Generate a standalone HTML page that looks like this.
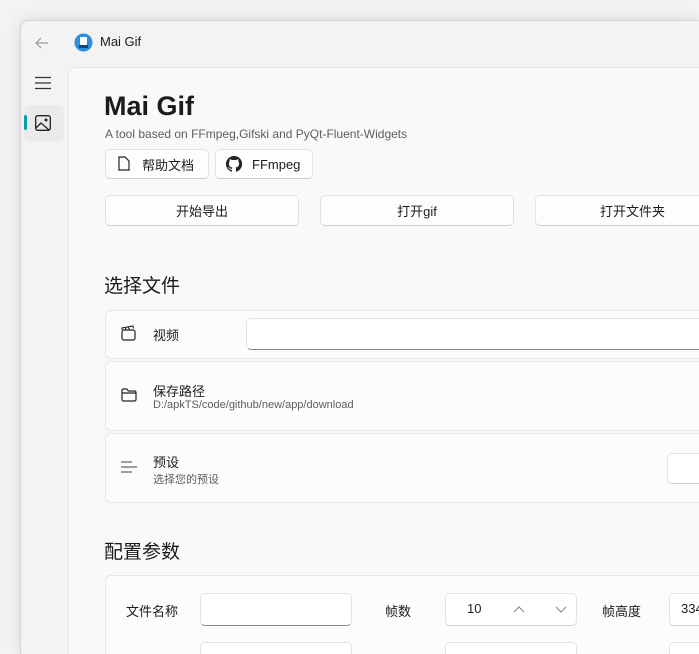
<!DOCTYPE html>
<html><head><meta charset="utf-8"><style>
*{box-sizing:border-box;margin:0;padding:0}
html,body{width:699px;height:654px;overflow:hidden}
body{background:#f3f3f3;font-family:"Segoe UI","Liberation Sans","Noto Sans CJK SC",sans-serif;color:#1b1b1b;position:relative}
.win{position:absolute;left:20px;top:20px;width:679px;height:634px;background:#f3f3f3;border:1px solid #d6d6d6;border-right:none;border-bottom:none;border-top-left-radius:8px;box-shadow:0 0 14px rgba(0,0,0,.12)}
.a{position:absolute}
.content{position:absolute;left:68px;top:67px;width:631px;height:587px;background:#f9f9f9;border-top:1px solid #e8e8e8;border-left:1px solid #e8e8e8;border-top-left-radius:8px}
.btn{position:absolute;background:#fdfdfd;border:1px solid #e3e3e3;border-bottom-color:#d0d0d0;border-radius:5px;font-size:13px;display:flex;align-items:center;justify-content:center}
.card{position:absolute;left:105px;width:594px;background:#fcfcfc;border:1px solid #e6e6e6;border-right:none;border-radius:6px 0 0 6px}
.inp{position:absolute;background:#fff;border:1px solid #e3e3e3;border-bottom:1px solid #8a8a8a;border-radius:5px}
.t13{font-size:13px}
.sub{font-size:11px;color:#5d5d5d}
</style></head><body>
<div class="win"></div>
<svg class="a" style="left:34px;top:35px" width="16" height="16" viewBox="0 0 16 16"><path d="M14 8H2M7 3L2 8l5 5" fill="none" stroke="#9a9a9a" stroke-width="1.2"/></svg>
<svg class="a" style="left:74px;top:33px" width="19" height="19" viewBox="0 0 19 19"><circle cx="9.5" cy="9.5" r="9" fill="#2b8fe0"/><rect x="6" y="4" width="7" height="8" rx="1" fill="#fff"/><rect x="5" y="12" width="9" height="3" fill="#14457a"/></svg>
<div class="a" style="left:100px;top:34px;font-size:13px">Mai Gif</div>
<svg class="a" style="left:35px;top:76px" width="17" height="14"><path d="M0 1.5h16M0 7h16M0 12.5h16" stroke="#333" stroke-width="1.3"/></svg>
<div class="a" style="left:24px;top:105px;width:40px;height:36px;background:#eaeaea;border-radius:5px"></div>
<div class="a" style="left:24px;top:115px;width:3px;height:15px;background:#0a9ea8;border-radius:2px"></div>
<svg class="a" style="left:35px;top:115px" width="16" height="16" viewBox="0 0 16 16"><rect x="0.7" y="0.7" width="14.6" height="14.6" rx="2" fill="none" stroke="#222" stroke-width="1.3"/><path d="M1 13l5-5 8 7" fill="none" stroke="#222" stroke-width="1.3"/><circle cx="11" cy="5" r="1.5" fill="#222"/></svg>
<div class="content"></div>
<div class="a" style="left:104px;top:91px;font-size:27px;font-weight:600">Mai Gif</div>
<div class="a sub" style="left:105px;top:127px;font-size:12px">A tool based on FFmpeg,Gifski and PyQt-Fluent-Widgets</div>
<div class="btn" style="left:105px;top:149px;width:104px;height:30px;justify-content:flex-start;padding-left:36px">帮助文档</div>
<svg class="a" style="left:118px;top:156px" width="12" height="15" viewBox="0 0 12 15"><path d="M1 1h6l4 4v9H1z" fill="none" stroke="#222" stroke-width="1.2"/></svg>
<div class="btn" style="left:215px;top:149px;width:98px;height:30px;justify-content:flex-start;padding-left:36px">FFmpeg</div>
<svg class="a" style="left:226px;top:156px" width="16" height="16" viewBox="0 0 16 16"><path fill="#222" d="M8 0a8 8 0 0 0-2.5 15.6c.4.1.5-.2.5-.4v-1.4c-2.2.5-2.7-1-2.7-1-.4-.9-.9-1.2-.9-1.2-.7-.5.1-.5.1-.5.8.1 1.2.8 1.2.8.7 1.3 1.9.9 2.3.7.1-.5.3-.9.5-1.1-1.8-.2-3.6-.9-3.6-4 0-.9.3-1.6.8-2.1-.1-.2-.4-1 .1-2.1 0 0 .7-.2 2.2.8a7.600 7.600 0 0 1 4 0c1.5-1 2.200-.8 2.200-.8.400 1.100.200 1.900.100 2.100.500.600.800 1.300.800 2.100 0 3.100-1.900 3.800-3.600 4 .300.300.500.800.500 1.500v2.200c0 .200.100.500.600.400A8 8 0 0 0 8 0z"/></svg>
<div class="btn" style="left:105px;top:195px;width:194px;height:31px">开始导出</div>
<div class="btn" style="left:320px;top:195px;width:194px;height:31px">打开gif</div>
<div class="btn" style="left:535px;top:195px;width:164px;height:31px;border-right:none;border-radius:5px 0 0 5px;padding-left:30px">打开文件夹</div>
<div class="a" style="left:104px;top:271px;font-size:19px">选择文件</div>
<div class="card" style="top:310px;height:49px"></div>
<svg class="a" style="left:121px;top:325px" width="15" height="16" viewBox="0 0 15 16"><rect x="1" y="5" width="13" height="10" rx="2" fill="none" stroke="#222" stroke-width="1.2"/><path d="M1 5V3l11-2 .5 2.5M4 2.5l1.5 2.5M7 2l1.5 2.5" fill="none" stroke="#222" stroke-width="1.1"/></svg>
<div class="a t13" style="left:153px;top:325px">视频</div>
<div class="inp" style="left:246px;top:318px;width:453px;height:32px;border-right:none;border-radius:5px 0 0 5px"></div>
<div class="card" style="top:361px;height:70px"></div>
<svg class="a" style="left:121px;top:388px" width="16" height="14" viewBox="0 0 16 14"><path d="M1 2.5a1.5 1.5 0 011.5-1.5h3l2 2h6a1.5 1.5 0 011.5 1.5v7a1.5 1.5 0 01-1.5 1.5h-11A1.5 1.5 0 011 11.5zM1 5h14" fill="none" stroke="#222" stroke-width="1.2"/></svg>
<div class="a t13" style="left:153px;top:381px">保存路径</div>
<div class="a sub" style="left:153px;top:399px">D:/apkTS/code/github/new/app/download</div>
<div class="card" style="top:433px;height:70px"></div>
<svg class="a" style="left:121px;top:461px" width="16" height="13"><path d="M0 1h11M0 6h16M0 11h11" stroke="#666" stroke-width="1.3"/></svg>
<div class="a t13" style="left:153px;top:452px">预设</div>
<div class="a sub" style="left:153px;top:471px">选择您的预设</div>
<div class="inp" style="left:667px;top:453px;width:32px;height:31px;border-bottom-color:#d0d0d0;border-right:none;border-radius:5px 0 0 5px"></div>
<div class="a" style="left:104px;top:537px;font-size:19px">配置参数</div>
<div class="card" style="top:575px;height:79px;border-bottom:none;border-radius:6px 0 0 0"></div>
<div class="a t13" style="left:126px;top:601px">文件名称</div>
<div class="inp" style="left:200px;top:593px;width:152px;height:33px"></div>
<div class="a t13" style="left:385px;top:601px">帧数</div>
<div class="inp" style="left:445px;top:593px;width:132px;height:33px;border-bottom-color:#d0d0d0"></div>
<div class="a t13" style="left:467px;top:601px">10</div>
<svg class="a" style="left:513px;top:604px" width="54" height="10"><path d="M1 8l5-5 5 5M43 3l5 5 5-5" fill="none" stroke="#888" stroke-width="1.1"/></svg>
<div class="a t13" style="left:602px;top:601px">帧高度</div>
<div class="inp" style="left:669px;top:593px;width:30px;height:33px;border-bottom-color:#d0d0d0;border-right:none;border-radius:5px 0 0 5px;overflow:hidden"><span class="t13" style="position:absolute;left:11px;top:7px">334</span></div>
<div class="inp" style="left:200px;top:642px;width:152px;height:12px;border-bottom:none;border-radius:5px 5px 0 0"></div>
<div class="inp" style="left:445px;top:642px;width:132px;height:12px;border-bottom:none;border-radius:5px 5px 0 0"></div>
<div class="inp" style="left:669px;top:642px;width:30px;height:12px;border-bottom:none;border-right:none;border-radius:5px 0 0 0"></div>
</body></html>
